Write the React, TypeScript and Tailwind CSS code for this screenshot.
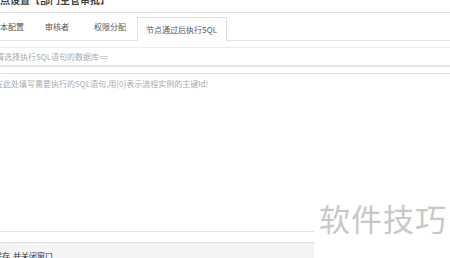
import React from "react";

export default function App() {
  const font = { fontFamily: '"Noto Sans CJK SC", "Noto Sans", sans-serif' };
  return (
    <div className="relative w-[450px] h-[258px] overflow-hidden bg-white" style={font}>
      <div className="w-[480px] -ml-[12px] flex flex-col">
        {/* title */}
        <div className="h-[12px] overflow-hidden">
          <div className="-mt-[6px] pl-[2px] text-[10px] leading-[12px] text-[#444] font-bold whitespace-nowrap">
            节点设置【部门主管审批】
          </div>
        </div>
        {/* tabs */}
        <div className="h-[29px] border-t border-b border-[#e2e2e2] flex items-end pl-[4px] text-[8px] text-[#555]">
          <div className="h-[27px] w-[53px] flex items-center whitespace-nowrap">基本配置</div>
          <div className="h-[27px] w-[49px] flex items-center whitespace-nowrap">审核者</div>
          <div className="h-[27px] w-[43px] flex items-center whitespace-nowrap">权限分配</div>
          <div className="h-[24px] w-[90px] -mb-px bg-white border border-b-0 border-[#e0e0e0] flex items-center pl-[8px] whitespace-nowrap text-[#555]">
            节点通过后执行SQL
          </div>
        </div>
        {/* input */}
        <div className="mt-[6px] h-[20px] border border-[#ececec] border-b-2 border-b-[#e2e2e2] flex items-center pl-[7px] text-[8px] text-[#aaa] whitespace-nowrap">
          请选择执行SQL语句的数据库==
        </div>
        {/* textarea */}
        <div className="mt-[6px] h-[159px] border-t border-b border-[#e2e2e2] pl-[7px] pt-[3px] text-[8px] leading-[14px] text-[#aaa] whitespace-nowrap">
          在此处填写需要执行的SQL语句,用{"{0}"}表示流程实例的主键Id!
        </div>
        {/* footer */}
        <div className="mt-[10px] h-[20px] border-t border-[#dedede] bg-[#f4f4f4] pt-[7px] pl-[6px] text-[8px] leading-[12px] text-[#333] whitespace-nowrap flex">
          <span>保存</span>
          <span className="ml-[3px]">并关闭窗口</span>
        </div>
      </div>
      {/* watermark */}
      <div className="absolute left-[314px] top-[198px] w-[136px] h-[60px] bg-white">
        <div className="absolute left-[5px] top-[2px] text-[31px] leading-[36px] text-[#c8c8c8] whitespace-nowrap tracking-[1px]">
          软件技巧
        </div>
      </div>
    </div>
  );
}
